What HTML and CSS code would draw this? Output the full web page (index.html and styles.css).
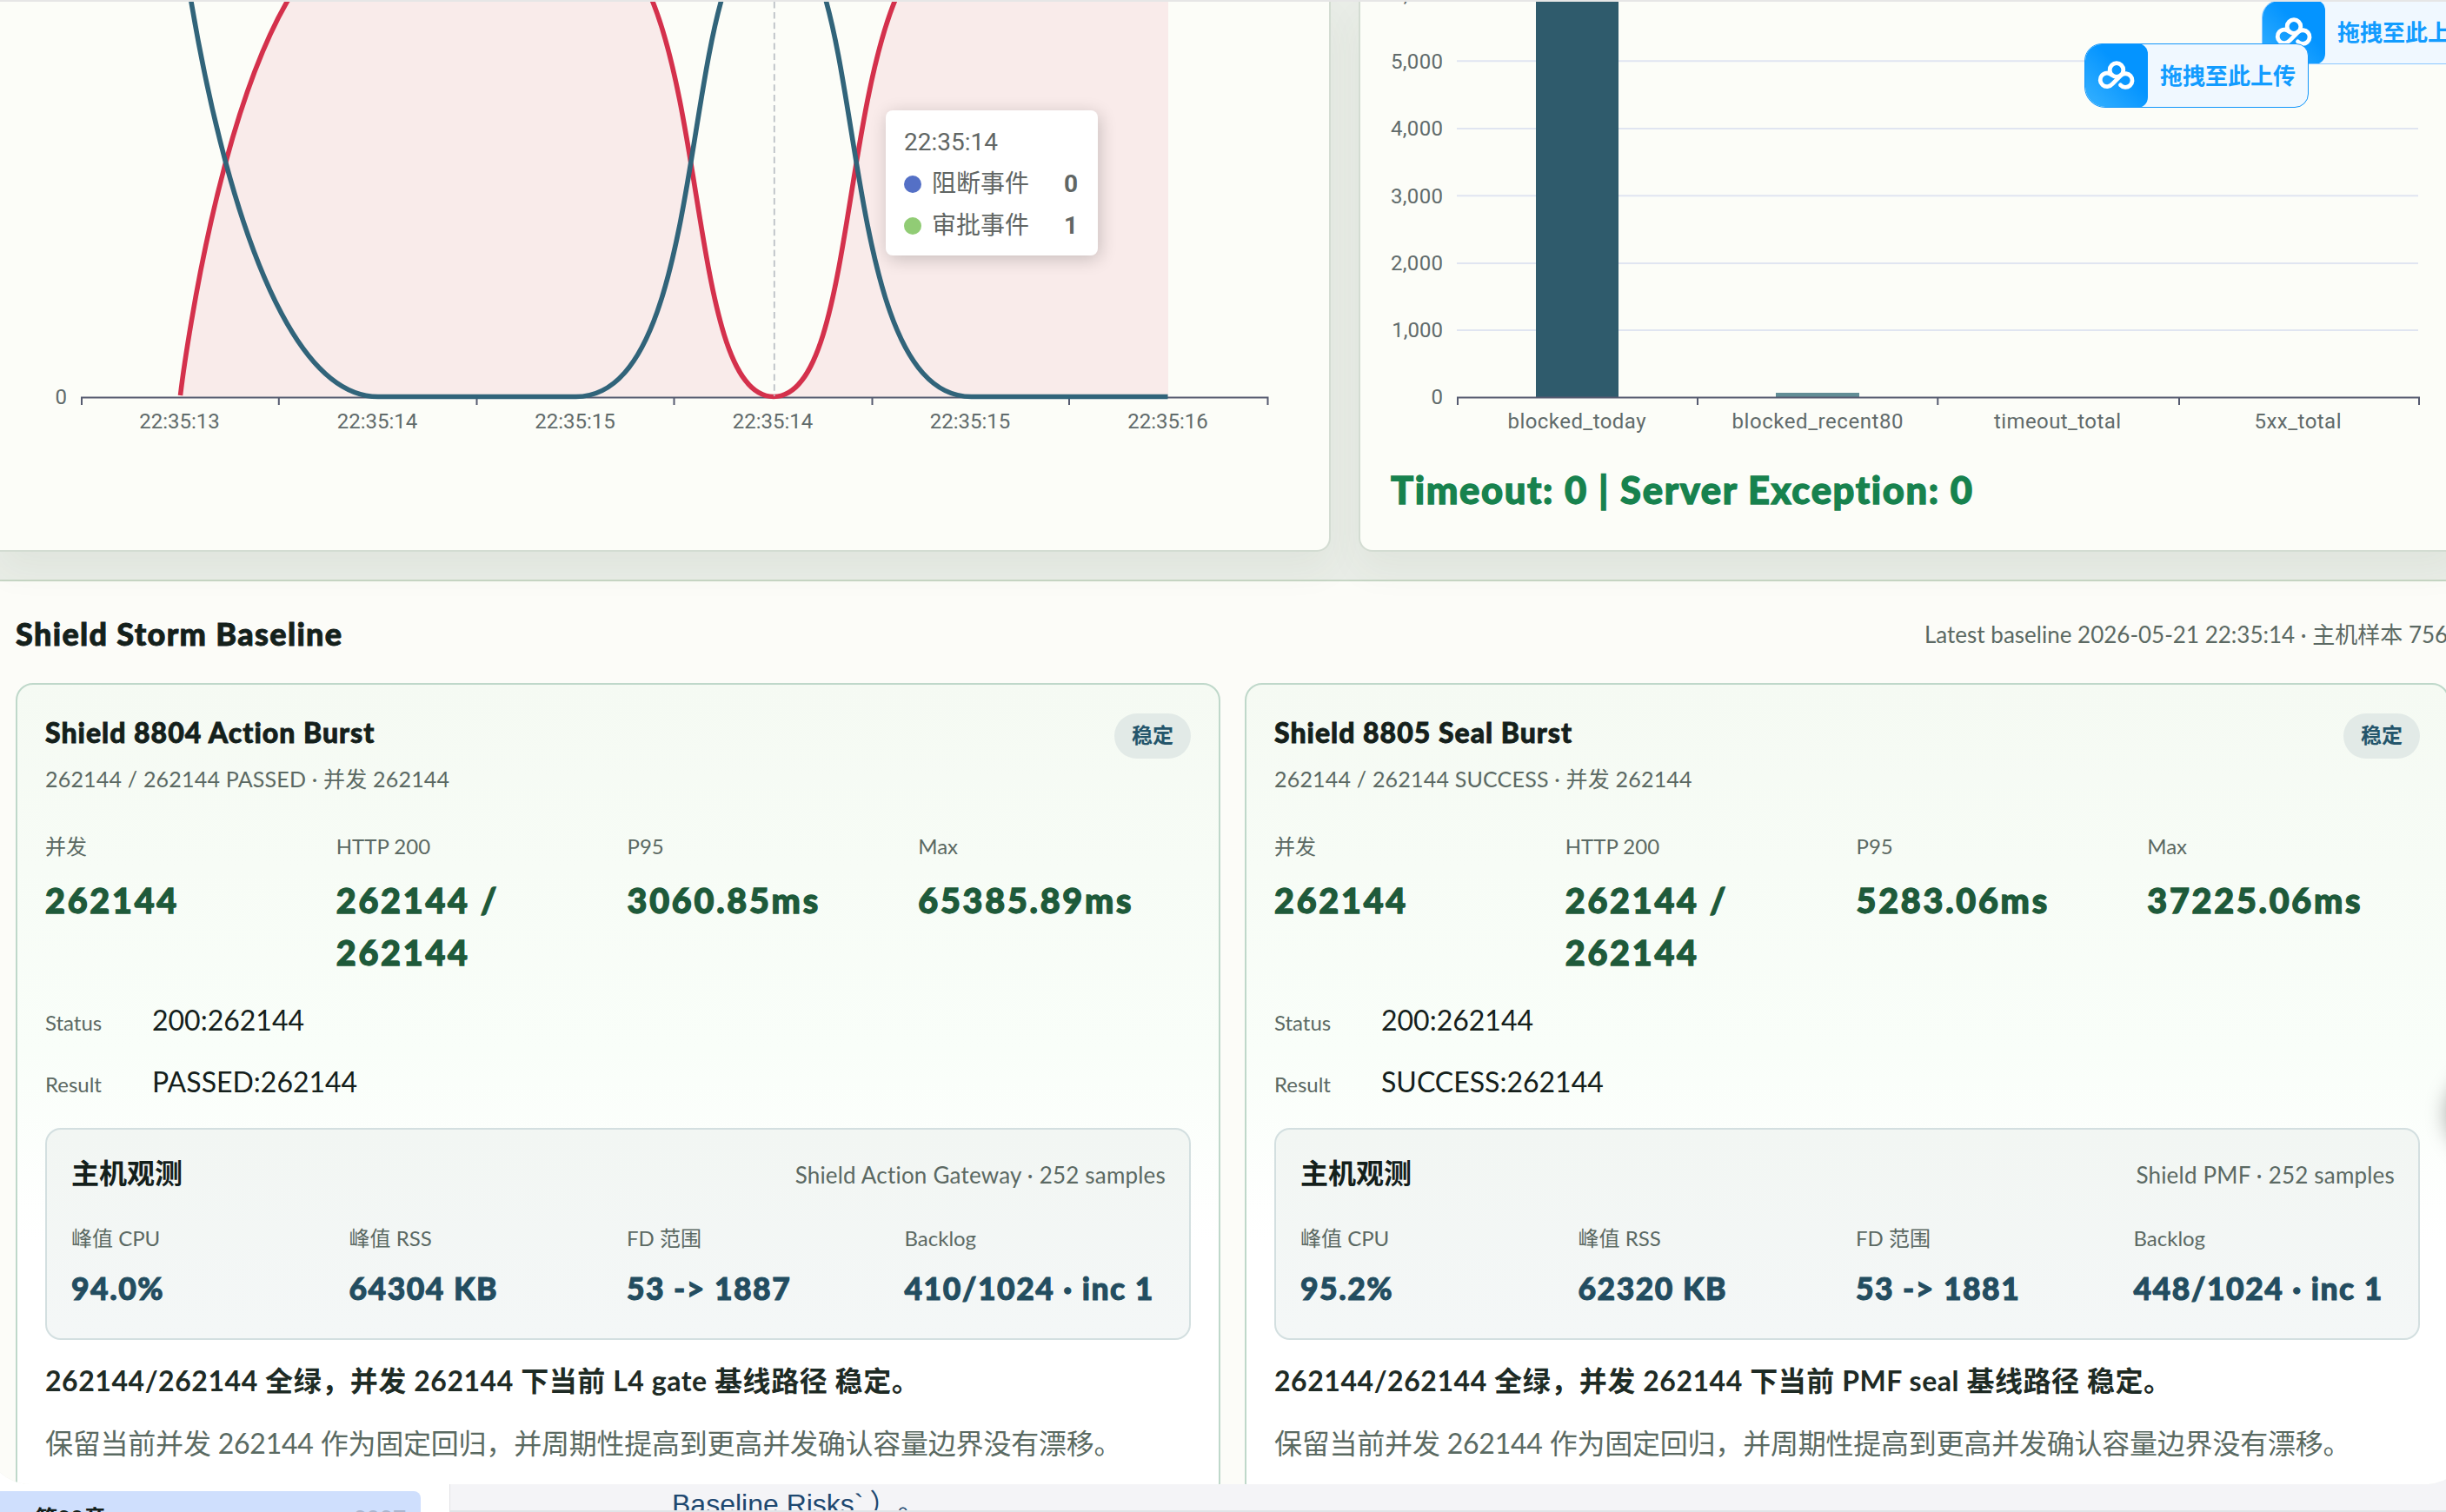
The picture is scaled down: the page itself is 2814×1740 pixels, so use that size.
FILE: index.html
```html
<!DOCTYPE html>
<html lang="zh-CN">
<head>
    <meta charset="UTF-8">
    <meta name="viewport" content="width=device-width, initial-scale=1.0">
    <title>Shield Storm Baseline</title>
    <link rel="stylesheet" href="styles.css">
</head>
<body>
    <svg class="defs" aria-hidden="true">
        <symbol id="cloud" viewBox="0 0 44 36">
            <g fill="none" stroke="#fff" stroke-width="4.8" stroke-linecap="round">
                <circle cx="22" cy="11.5" r="7.8"/>
                <path d="M26.5 28.8 A7.8 7.8 0 1 0 27.2 17.6 L17 27.8 A7.8 7.8 0 1 1 16.4 17.2"/>
            </g>
        </symbol>
    </svg>

    <div class="screen">
        <div class="topbar"></div>

        <!-- Графики -->
        <div class="charts">
            <section class="panel trend">
                <svg class="trend-chart" viewBox="0 2 1500 520">
                    <path class="area" d="M207.5 456.5 C207.5 456.5 271 -82 435 -82 L662.5 -82 C826 -82 776 456.5 890 456.5 C1004 456.5 954 -82 1117.5 -82 H1344 V456.5 Z"/>
                    <path class="axis" d="M93 457.5 H1459.5 M94 457 V466 M320.8 457 V466 M548.5 457 V466 M775.5 457 V466 M1003.5 457 V466 M1230 457 V466 M1458.5 457 V466"/>
                    <path class="line red" d="M207.5 455 C207.5 455 271 -82 435 -82 L662.5 -82 C826 -82 776 456.5 890 456.5 C1004 456.5 954 -82 1117.5 -82 H1344"/>
                    <path class="line blue" d="M207.5 -82 C207.5 -82 271 456.5 435 456.5 L662.5 456.5 C826 456.5 776 -82 890 -82 C1004 -82 954 456.5 1117.5 456.5 H1343.5"/>
                    <path class="pointer" d="M890.8 2 V456"/>
                    <text class="tick end" x="77" y="465">0</text>
                    <text class="tick" x="206.5" y="493">22:35:13</text>
                    <text class="tick" x="434" y="493">22:35:14</text>
                    <text class="tick" x="661.5" y="493">22:35:15</text>
                    <text class="tick" x="889" y="493">22:35:14</text>
                    <text class="tick" x="1116" y="493">22:35:15</text>
                    <text class="tick" x="1343.5" y="493">22:35:16</text>
                </svg>
                <div class="tooltip">
                    <div class="tip-time">22:35:14</div>
                    <div class="tip-row"><i class="dot blocked"></i>阻断事件<b>0</b></div>
                    <div class="tip-row"><i class="dot approved"></i>审批事件<b>1</b></div>
                </div>
            </section>

            <section class="panel totals">
                <svg class="totals-chart" viewBox="1600 2 1200 520">
                    <path class="grid" d="M1676 70.3 H2782 M1676 148 H2782 M1676 225.3 H2782 M1676 303 H2782 M1676 380 H2782"/>
                    <rect class="bar" x="1767" y="0" width="95" height="457"/>
                    <rect class="bar light" x="2043" y="452" width="96" height="5"/>
                    <path class="axis" d="M1676 457.5 H2784 M1677 457 V466 M1953 457 V466 M2229.3 457 V466 M2507 457 V466 M2783 457 V466"/>
                    <text class="tick end" x="1660" y="1.5">6,000</text>
                    <text class="tick end" x="1660" y="79" textLength="60">5,000</text>
                    <text class="tick end" x="1660" y="156" textLength="60">4,000</text>
                    <text class="tick end" x="1660" y="233.5" textLength="60">3,000</text>
                    <text class="tick end" x="1660" y="310.5" textLength="60">2,000</text>
                    <text class="tick end" x="1660" y="387.5">1,000</text>
                    <text class="tick end" x="1660" y="465">0</text>
                    <text class="tick" x="1814" y="493" textLength="159">blocked_today</text>
                    <text class="tick" x="2091" y="493" textLength="197">blocked_recent80</text>
                    <text class="tick" x="2367" y="493" textLength="146">timeout_total</text>
                    <text class="tick" x="2643.5" y="493" textLength="100">5xx_total</text>
                </svg>
                <div class="totals-note">Timeout: 0 | Server Exception: 0</div>
            </section>
        </div>

        <!-- Базовая линия -->
        <section class="baseline">
            <div class="baseline-head">
                <h2>Shield Storm Baseline</h2>
                <span class="meta">Latest baseline 2026-05-21 22:35:14 · 主机样本 756</span>
            </div>
            <div class="cards">
                <article class="card">
                    <div class="card-head">
                        <h3>Shield 8804 Action Burst</h3>
                        <span class="badge">稳定</span>
                    </div>
                    <p class="sub">262144 / 262144 PASSED · 并发 262144</p>
                    <div class="stats">
                        <div><label>并发</label><strong>262144</strong></div>
                        <div><label>HTTP 200</label><strong>262144 / 262144</strong></div>
                        <div><label>P95</label><strong>3060.85ms</strong></div>
                        <div><label>Max</label><strong>65385.89ms</strong></div>
                    </div>
                    <div class="row"><label>Status</label><span>200:262144</span></div>
                    <div class="row"><label>Result</label><span>PASSED:262144</span></div>
                    <div class="host">
                        <div class="host-head"><h4>主机观测</h4><span>Shield Action Gateway · 252 samples</span></div>
                        <div class="host-stats">
                            <div><label>峰值 CPU</label><strong>94.0%</strong></div>
                            <div><label>峰值 RSS</label><strong>64304 KB</strong></div>
                            <div><label>FD 范围</label><strong>53 -&gt; 1887</strong></div>
                            <div><label>Backlog</label><strong>410/1024 · inc 1</strong></div>
                        </div>
                    </div>
                    <p class="verdict">262144/262144 全绿，并发 262144 下当前 L4 gate 基线路径 稳定。</p>
                    <p class="advice">保留当前并发 262144 作为固定回归，并周期性提高到更高并发确认容量边界没有漂移。</p>
                </article>

                <article class="card">
                    <div class="card-head">
                        <h3>Shield 8805 Seal Burst</h3>
                        <span class="badge">稳定</span>
                    </div>
                    <p class="sub">262144 / 262144 SUCCESS · 并发 262144</p>
                    <div class="stats">
                        <div><label>并发</label><strong>262144</strong></div>
                        <div><label>HTTP 200</label><strong>262144 / 262144</strong></div>
                        <div><label>P95</label><strong>5283.06ms</strong></div>
                        <div><label>Max</label><strong>37225.06ms</strong></div>
                    </div>
                    <div class="row"><label>Status</label><span>200:262144</span></div>
                    <div class="row"><label>Result</label><span>SUCCESS:262144</span></div>
                    <div class="host">
                        <div class="host-head"><h4>主机观测</h4><span>Shield PMF · 252 samples</span></div>
                        <div class="host-stats">
                            <div><label>峰值 CPU</label><strong>95.2%</strong></div>
                            <div><label>峰值 RSS</label><strong>62320 KB</strong></div>
                            <div><label>FD 范围</label><strong>53 -&gt; 1881</strong></div>
                            <div><label>Backlog</label><strong>448/1024 · inc 1</strong></div>
                        </div>
                    </div>
                    <p class="verdict">262144/262144 全绿，并发 262144 下当前 PMF seal 基线路径 稳定。</p>
                    <p class="advice">保留当前并发 262144 作为固定回归，并周期性提高到更高并发确认容量边界没有漂移。</p>
                </article>
            </div>
        </section>

        <!-- Плавающие элементы -->
        <div class="upload back"><span class="upload-icon"><svg><use href="#cloud"/></svg></span>拖拽至此上传</div>
        <div class="upload front"><span class="upload-icon"><svg><use href="#cloud"/></svg></span>拖拽至此上传</div>
        <div class="topline"></div>
        <div class="float-button"></div>
    </div>

    <div class="under">
        <aside class="chapters">
            <div class="chapter"><b>第20章</b><span>2027</span></div>
        </aside>
        <main class="document">
            <p>Baseline Risks`<span>）。</span></p>
        </main>
    </div>
</body>
</html>
```
FILE: styles.css
```css
* {
    box-sizing: border-box;
}

body {
    margin: 0;
    height: 1740px;
    overflow: hidden;
    background: linear-gradient(90deg, #fff 516px, #f4f4f7 516px);
    font-family: Lato, "Noto Sans CJK SC", sans-serif;
    font-variant-ligatures: none;
    color: #14201b;
}

h2, h3, h4, p {
    margin: 0;
}

label {
    display: block;
    font-size: 24px;
    line-height: 36px;
    color: #5b6963;
}

.defs {
    position: absolute;
    width: 0;
    height: 0;
}

.screen {
    position: relative;
    width: 2859px;
    height: 1708px;
    margin-left: -17px;
    padding-left: 17px;
    overflow: hidden;
    border-radius: 0 0 52px 52px;
    background: #e9ede7;
}

.topbar {
    height: 2px;
}

.topline {
    position: absolute;
    z-index: 3;
    inset: 0 0 auto;
    height: 2px;
    background: #e6e6e6;
}

/* Графики */
.charts {
    position: relative;
    z-index: 1;
    display: grid;
    grid-template-columns: 1531px 1270px;
    gap: 32px;
    height: 633px;
}

.panel {
    position: relative;
    background: #fcfdf8;
    border: 2px solid #d3dcd2;
    border-top: 0;
    border-radius: 0 0 16px 16px;
    box-shadow: 0 20px 44px rgba(70, 90, 50, 0.055);
}

.trend {
    border-left: 0;
    border-bottom-left-radius: 0;
}

.trend-chart {
    display: block;
    width: 1500px;
    height: 520px;
}

.totals {
    padding-left: 35px;
}

.totals-chart {
    display: block;
    width: 1200px;
    height: 520px;
}

.totals-note {
    margin-top: 13px;
    font-size: 43.5px;
    line-height: 56px;
    font-weight: 900;
    letter-spacing: 1.65px;
    color: #17824e;
    -webkit-text-stroke: 1.3px #17824e;
}

.area {
    fill: #f9ebea;
}

.axis {
    fill: none;
    stroke: #565b70;
    stroke-width: 2;
}

.grid {
    stroke: #e0e5f1;
    stroke-width: 2;
}

.line {
    fill: none;
    stroke-width: 5.6;
}

.red {
    stroke: #d4314c;
}

.blue {
    stroke: #31647a;
}

.pointer {
    stroke: #bcc1c6;
    stroke-width: 1.8;
    stroke-dasharray: 7.5 4.4;
}

.bar {
    fill: #2f5b6c;
}

.bar.light {
    fill: #628e96;
}

.tick {
    font-family: Roboto, sans-serif;
    font-size: 24px;
    fill: #616b6b;
    text-anchor: middle;
}

.tick.end {
    text-anchor: end;
}

.tooltip {
    position: absolute;
    left: 1019px;
    top: 125px;
    width: 244px;
    height: 167px;
    padding: 19px 23px 18px 21px;
    border-radius: 8px;
    background: #fff;
    box-shadow: 2px 4px 20px rgba(0, 0, 0, 0.2);
    font: 28px/36px Roboto, "Noto Sans CJK SC", sans-serif;
    color: #616664;
}

.tip-row {
    display: flex;
    align-items: center;
    margin-top: 12px;
}

.tip-row b {
    margin-left: auto;
}

.dot {
    width: 20px;
    height: 20px;
    margin-right: 12px;
    border-radius: 50%;
}

.blocked {
    background: #5470c6;
}

.approved {
    background: #91cc75;
}

/* Базовая линия */
.baseline {
    height: 1060px;
    margin-top: 32px;
    padding: 40px 0 0 18px;
    border-top: 2px solid #c7d6c5;
    background: #fcfcf8;
}

.baseline-head {
    display: flex;
    justify-content: space-between;
    width: 2803px;
    height: 77px;
}

.baseline-head h2 {
    font-size: 36px;
    line-height: 40px;
    font-weight: 900;
    letter-spacing: 1.35px;
    white-space: nowrap;
    -webkit-text-stroke: 0.9px #14201b;
}

.meta {
    width: 607px;
    font-size: 26px;
    line-height: 43px;
    color: #5b6963;
    white-space: nowrap;
}

.cards {
    display: grid;
    grid-template-columns: 1386px 1386px;
    gap: 28px;
}

.card {
    height: 940px;
    padding: 33px 32px 0 32px;
    border: 2px solid #bfd8ca;
    border-radius: 20px;
    background: linear-gradient(180deg, #f5faf3 0, #f9fef9 420px, #fff 640px);
}

.card-head {
    display: flex;
    justify-content: space-between;
    height: 55px;
}

.card-head h3 {
    font-size: 32px;
    line-height: 44px;
    font-weight: 900;
    letter-spacing: 1px;
    -webkit-text-stroke: 0.8px #14201b;
}

.badge {
    width: 88px;
    height: 52px;
    border-radius: 26px;
    background: #e2eae7;
    color: #24556b;
    font-size: 24px;
    line-height: 50px;
    font-weight: 700;
    text-align: center;
}

.sub {
    font-size: 25px;
    line-height: 40px;
    letter-spacing: 0.2px;
    color: #5b6963;
}

.stats {
    display: grid;
    grid-template-columns: repeat(4, 1fr);
    gap: 21px;
    margin-top: 40px;
    height: 193.5px;
}

.stats strong {
    display: block;
    margin-top: 14px;
    font-size: 39.5px;
    line-height: 59.5px;
    font-weight: 900;
    letter-spacing: 2.75px;
    color: #1e5a3a;
    -webkit-text-stroke: 1.3px #1e5a3a;
}

.row {
    display: grid;
    grid-template-columns: 123px 1fr;
    align-items: baseline;
    height: 71.5px;
}

.row span {
    font-size: 32px;
    line-height: 48px;
}

.host {
    height: 244px;
    margin-top: 5px;
    padding: 27px 27px 0 28px;
    border: 2px solid #d3dfe0;
    border-radius: 18px;
    background: linear-gradient(180deg, #f2f6f3, #f4f7f7);
}

.host-head {
    display: flex;
    justify-content: space-between;
    height: 80px;
}

.host-head h4 {
    font-size: 32px;
    line-height: 46px;
    font-weight: 700;
}

.host-head span {
    font-size: 26px;
    line-height: 50px;
    letter-spacing: 0.2px;
    color: #5b6963;
}

.host-stats {
    display: grid;
    grid-template-columns: repeat(4, 1fr);
    gap: 19px;
    white-space: nowrap;
}

.host-stats strong {
    display: block;
    margin-top: 14px;
    font-size: 35.5px;
    line-height: 52px;
    font-weight: 900;
    letter-spacing: 1.5px;
    color: #234d60;
    -webkit-text-stroke: 1px #234d60;
}

.verdict {
    margin-top: 23px;
    font-size: 32px;
    line-height: 48px;
    font-weight: 700;
    letter-spacing: 0.55px;
    color: #1e2b25;
}

.advice {
    margin-top: 24px;
    font-size: 32px;
    line-height: 48px;
    letter-spacing: -0.22px;
    color: #5a6a62;
}

/* Плавающие элементы */
.upload {
    position: absolute;
    z-index: 2;
    display: flex;
    align-items: center;
    width: 258px;
    height: 74px;
    border: 1.5px solid #1296fb;
    border-radius: 20px 14px 16px 24px;
    background: #f0f8ff;
    color: #129cff;
    font-size: 26px;
    line-height: 36px;
    font-weight: 700;
    white-space: nowrap;
    overflow: hidden;
}

.upload.front {
    left: 2415px;
    top: 50px;
}

.upload.back {
    left: 2619px;
    top: 0;
    border-color: #8cc8ff;
}

.upload-icon {
    display: flex;
    align-items: center;
    justify-content: center;
    width: 72px;
    height: 74px;
    margin-right: 14px;
    border-radius: 0 12px 12px 0;
    background: linear-gradient(45deg, #2fadff 10%, #0494ff 60%);
}

.upload-icon svg {
    width: 44px;
    height: 36px;
}

.float-button {
    position: absolute;
    left: 2832px;
    top: 1232px;
    width: 96px;
    height: 96px;
    border-radius: 50%;
    background: #fff;
    box-shadow: 0 2px 24px rgba(0, 0, 0, 0.35);
}

/* Нижний слой */
.under {
    display: flex;
    height: 32px;
    overflow: hidden;
}

.chapters {
    width: 517px;
    padding-top: 8px;
    background: #fff;
}

.chapter {
    display: flex;
    justify-content: space-between;
    width: 484px;
    height: 60px;
    padding: 15px 17px 0 40px;
    border-radius: 0 8px 0 0;
    background: #cfdffd;
    font-size: 26px;
    line-height: 32px;
}

.chapter span {
    color: #a9b6cf;
    font-weight: 700;
}

.document {
    flex: 1;
    height: 32px;
    padding-left: 255px;
    overflow: hidden;
    border-left: 1px solid #e3e3e6;
    border-bottom: 2px solid #e0e4e8;
    background: #f4f4f7;
}

.document p {
    margin-top: 3px;
    font: 32px/40px "Liberation Sans", "Noto Sans CJK SC", sans-serif;
    color: #1e4870;
    white-space: nowrap;
}

.document p span {
    margin-left: 7px;
    text-spacing-trim: space-all;
}
```
